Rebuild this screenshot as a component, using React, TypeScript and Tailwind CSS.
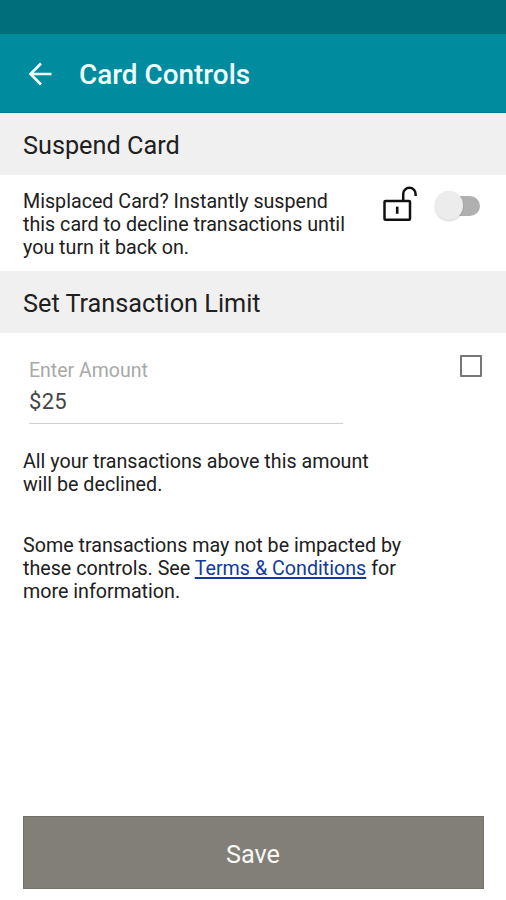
import React from "react";

function BackIcon() {
  return (
    <svg className="mt-px ml-7 h-6 w-6 shrink-0" viewBox="0 0 24 24" fill="none" stroke="#effcfd" strokeWidth="2.7">
      <path d="M23.5 12H2.5M13 1.5 2.5 12 13 22.5" />
    </svg>
  );
}

function UnlockIcon() {
  return (
    <svg className="h-[38px] w-[36px] shrink-0" viewBox="0 0 36 38" fill="none" stroke="#111111" strokeWidth="2.5">
      <rect x="3.5" y="16" width="25.5" height="18.8" rx="1" />
      <path d="M22.2 16V9a6.2 6.2 0 0 1 12.4 0V11" />
      <path d="M16.2 21.6v7.2" strokeWidth="2.6" />
    </svg>
  );
}

function SectionHeader({ children, className }: { children: React.ReactNode; className: string }) {
  return (
    <h2 className={`flex items-center bg-[#f0f0f0] pl-[23px] text-[25.25px] font-normal text-[#202020] ${className}`}>
      {children}
    </h2>
  );
}

function Toggle() {
  return (
    <button aria-label="Suspend card" className="relative h-8 w-12">
      <span className="absolute top-[6px] left-[14px] h-5 w-[33px] rounded-full bg-[#b0b0b0]" />
      <span className="absolute top-[1px] left-[2px] h-[29px] w-[28px] rounded-full bg-[#ececec] shadow-[0_1px_2px_rgba(0,0,0,0.18)]" />
    </button>
  );
}

export default function App() {
  return (
    <div className="flex h-[900px] w-[506px] flex-col overflow-hidden bg-white font-['Roboto',sans-serif] text-[#202020]">
      <div className="h-[34px] shrink-0 bg-[#006f7b]" />
      <header className="flex h-[79px] shrink-0 items-center border-b border-[#087b8b] bg-[#008c9e]">
        <BackIcon />
        <h1 className="mt-[3px] ml-[27px] text-[27.9px] font-medium text-[#effcfd]">Card Controls</h1>
      </header>

      <SectionHeader className="h-[62px] shrink-0 pt-[3px]">Suspend Card</SectionHeader>
      <section className="flex h-[96px] shrink-0 pl-[23px]">
        <p className="w-[358px] pt-[15px] text-[19.68px] leading-[23px] whitespace-nowrap">
          Misplaced Card? Instantly suspend
          <br />
          this card to decline transactions until
          <br />
          you turn it back on.
        </p>
        <div className="flex pt-[10px]">
          <UnlockIcon />
          <div className="ml-4 pt-[5px]">
            <Toggle />
          </div>
        </div>
      </section>

      <SectionHeader className="h-[62px] shrink-0 pt-[3px]">Set Transaction Limit</SectionHeader>
      <section className="flex h-[91px] shrink-0 justify-between pr-6 pl-[29px]">
        <div className="flex w-[314px] flex-col border-b border-[#cfcfcf]">
          <label className="mt-[26px] text-[19.5px] leading-6 text-[#a8a8a8]">Enter Amount</label>
          <span className="mt-[7px] text-[22px] leading-6 tracking-[0.3px] text-[#444444]">$25</span>
        </div>
        <div className="mt-[22px] h-[22px] w-[22px] rounded-[1px] border-2 border-[#777777]" />
      </section>

      <p className="mt-[26px] pl-[23px] text-[19.68px] leading-[23px] whitespace-nowrap">
        All your transactions above this amount
        <br />
        will be declined.
      </p>
      <p className="mt-[38px] pl-[23px] text-[19.68px] leading-[23px] whitespace-nowrap">
        Some transactions may not be impacted by
        <br />
        these controls. See{" "}
        <a className="text-[#123a9c] underline decoration-2 underline-offset-2">Terms &amp; Conditions</a> for
        <br />
        more information.
      </p>

      <button className="mr-[22px] ml-[23px] mt-auto mb-[11px] h-[73px] border border-[#72716a] bg-[#817f77] pt-[4px] pr-px text-[25.25px] text-[#f8f8f4]">
        Save
      </button>
    </div>
  );
}
